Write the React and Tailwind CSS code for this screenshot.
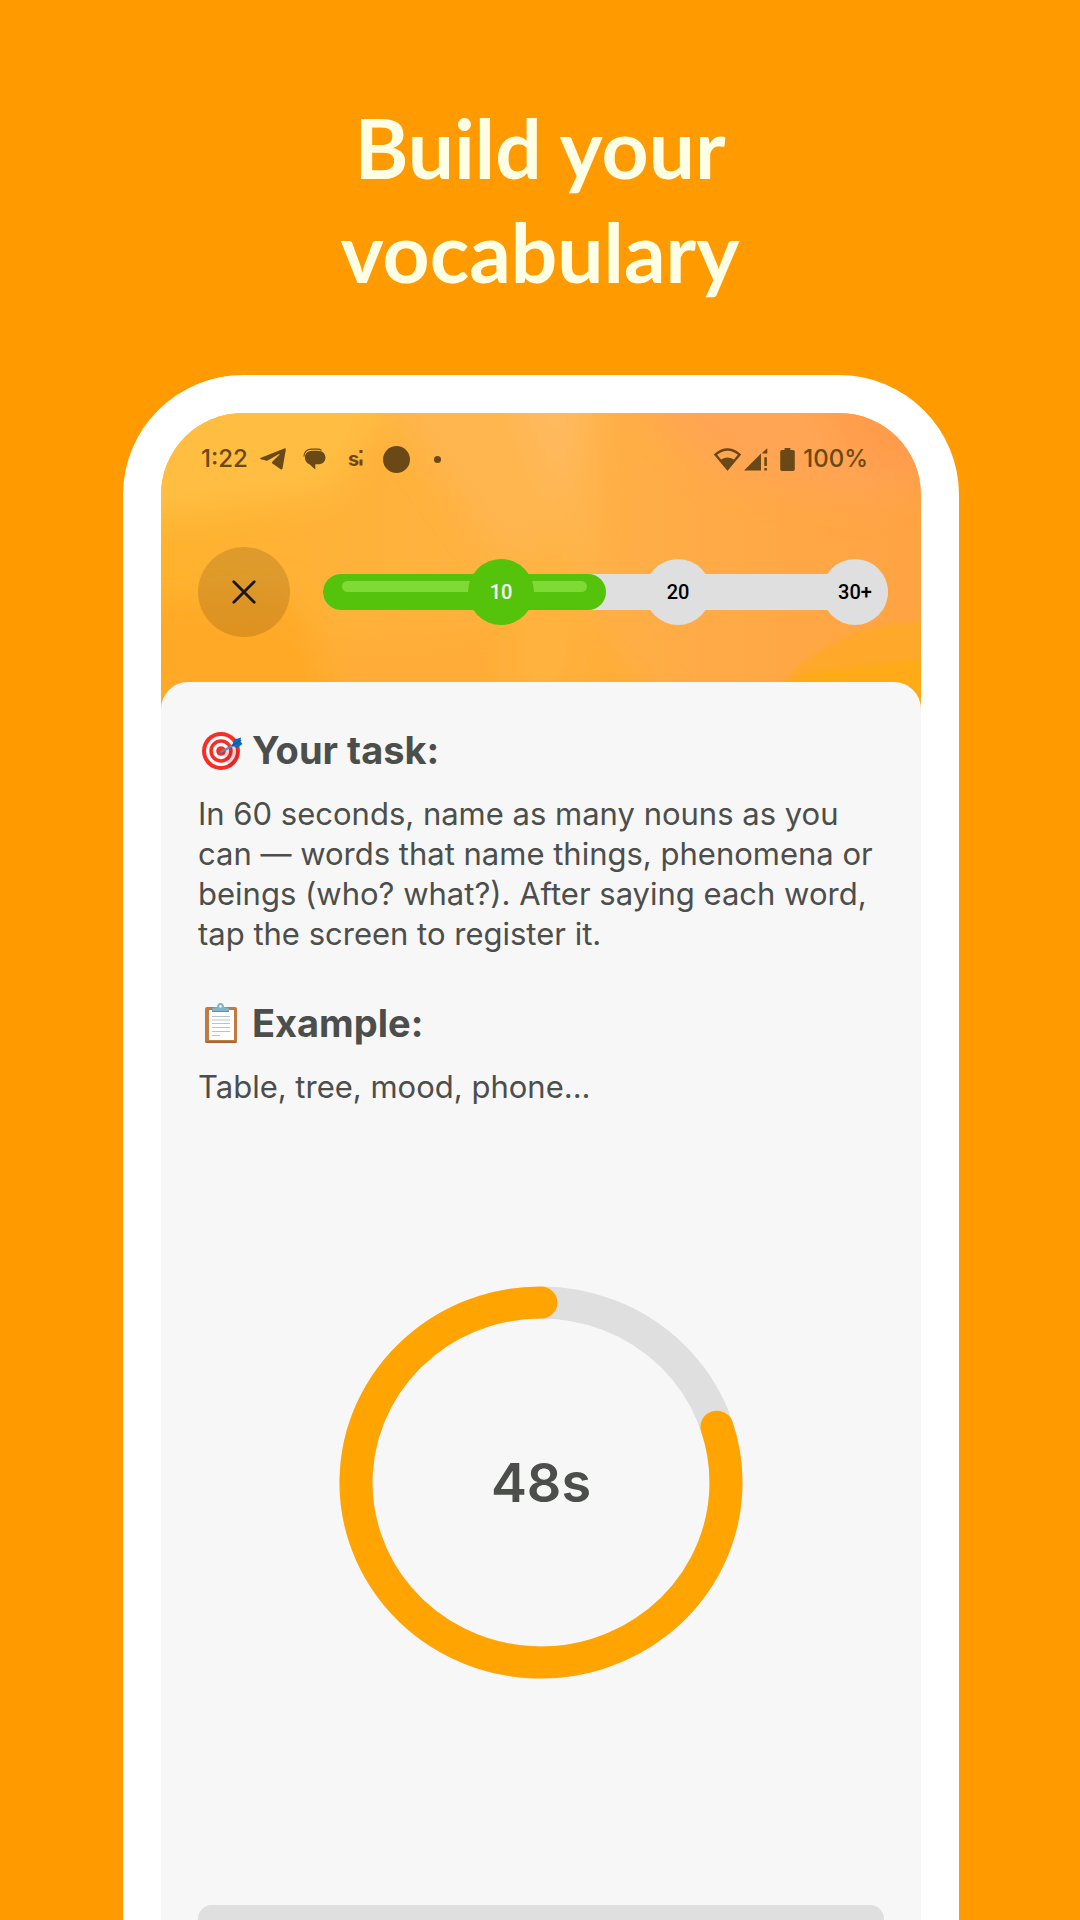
import React from "react";

const STEPS = [
  { label: "10", done: true },
  { label: "20", done: false },
  { label: "30+", done: false },
];

function HeaderArt() {
  return (
    <svg className="absolute inset-x-0 top-0 h-[300px] w-full" viewBox="0 0 760 300" preserveAspectRatio="none" aria-hidden="true">
      <defs>
        <linearGradient id="base" x1="0" y1="0" x2="1" y2="0">
          <stop offset="0" stopColor="#ffb22e" />
          <stop offset="0.5" stopColor="#ffb245" />
          <stop offset="0.72" stopColor="#ffaa47" />
          <stop offset="1" stopColor="#ffa343" />
        </linearGradient>
        <filter id="soft" x="-20%" y="-20%" width="140%" height="140%">
          <feGaussianBlur stdDeviation="16" />
        </filter>
        <filter id="edge" x="-20%" y="-20%" width="140%" height="140%">
          <feGaussianBlur stdDeviation="2" />
        </filter>
      </defs>
      <rect width="760" height="300" fill="url(#base)" />
      <g filter="url(#soft)">
        <path d="M-40 -40H250L170 80L0 105L-40 110Z" fill="#ffbe42" />
        <path d="M210 -40H440L430 180L330 130L250 20Z" fill="#ffb650" />
        <path d="M-40 190L120 180L260 340H-40Z" fill="#ffa927" />
        <path d="M150 230L420 190L540 340H200Z" fill="#ffad38" />
        <path d="M350 -40H430L400 90Z" fill="#ffba60" />
        <path d="M395 110L425 180L415 270L350 290L350 190Z" fill="#ffb23c" />
        <path d="M450 -40H800V50L700 90L560 60Z" fill="#ffa552" />
        <path d="M640 -40H800V80L700 50Z" fill="#ff9c4b" />
      </g>
      <path d="M586 310L632 258Q690 205 780 208V310Z" fill="#ffa82a" filter="url(#edge)" />
      <path d="M590 310L640 262Q690 255 780 245V310Z" fill="#ffaa18" filter="url(#edge)" />
    </svg>
  );
}

function StatusBar() {
  return (
    <div className="flex h-7 items-center justify-between pl-[40px] pr-[53px] font-['Inter',sans-serif] text-2xl font-medium text-[#6a4916]">
      <div className="flex items-center">
        <span className="w-[46px] whitespace-nowrap">1:22</span>
        <svg className="ml-[13px] h-[22px] w-[26px]" viewBox="0 0 26 22" fill="currentColor" aria-hidden="true">
          <path d="M1 9.8L24.2.4Q26-.2 25.8 1.7L22.6 20.3Q22.2 22 20.7 21.2L12.4 15.4Q11.4 14.6 12.3 13.7L19.5 6.4Q19.8 5.8 19 6.1L8.2 12.3Q7 12.9 5.8 12.6L.9 11.2Q-.7 10.5 1 9.8Z" />
        </svg>
        <svg className="ml-[17px] h-[22px] w-[23px]" viewBox="0 0 23 22" fill="currentColor" aria-hidden="true">
          <path d="M9 2.7H15C25 2.7 24.6 16.2 16 16.2H12.3V21.6L6.4 16.3C.2 14.2-.2 3 9 2.7Z" />
          <path d="M.9 8.5C1.2 3.6 4 1.3 8 1.1H15Q17 1.1 18.4 2.4" fill="none" stroke="currentColor" strokeWidth="1.1" />
        </svg>
        <span className="ml-[22px] flex items-end" aria-label="si">
          <span className="text-xl font-bold leading-5">s</span>
          <svg className="mb-[3px] h-4 w-[4px]" viewBox="0 0 4 16" fill="currentColor" aria-hidden="true">
            <path d="M.5 0h3v3h-3zM.5 9.5h3v6h-3z" />
          </svg>
        </span>
        <span className="ml-5 size-[27px] rounded-full bg-current" />
        <span className="ml-6 size-[7px] rounded-full bg-current" />
      </div>
      <div className="flex items-center">
        <svg className="h-[23px] w-[27px]" viewBox="0 0 27 23" fill="currentColor" aria-hidden="true">
          <path d="M1.4 6.6Q13.5-3.4 25.6 6.6L13.5 21Z" fill="none" stroke="currentColor" strokeWidth="2.4" />
          <path d="M5.5 12.5Q13.5 6.5 21.5 12.5L13.5 22.6Z" />
        </svg>
        <svg className="ml-[3px] h-[23px] w-6" viewBox="0 0 24 23" fill="currentColor" aria-hidden="true">
          <path d="M0 22.6L17 5.5V22.6ZM18 4.9L23.3.2V5.4H18.5ZM20.3 9.2h2.6v8.7h-2.6zM20.3 20h2.6v2.6h-2.6z" />
        </svg>
        <svg className="ml-3 h-[23px] w-[15px]" viewBox="0 0 15 23" fill="currentColor" aria-hidden="true">
          <path d="M4.6 0h5.8v2H13q1.8 0 1.8 1.8v17.4Q14.800 23 13 23H2Q.2 23 .2 21.200V3.800Q.2 2 2 2h2.600Z" />
        </svg>
        <span className="ml-2">100%</span>
      </div>
    </div>
  );
}

function Progress() {
  return (
    <div className="relative flex-1" role="progressbar" aria-label="Words named" aria-valuemin={0} aria-valuemax={100} aria-valuenow={50}>
      <div className="absolute inset-x-0 top-[15px] h-9 rounded-full bg-[#dfdfdf]">
        <div className="h-full w-1/2 rounded-full bg-[#55c20b] px-[19px] pt-[7px]">
          <div className="h-[11px] rounded-full bg-[#7fda35]" />
        </div>
      </div>
      <ol className="relative flex pl-[34px]">
        {STEPS.map((s) => (
          <li key={s.label} className="flex flex-1 justify-end">
            <span
              className={
                "flex size-[66px] items-center justify-center rounded-full font-['Roboto',sans-serif] text-xl font-medium " +
                (s.done ? "bg-[#55c20b] text-white" : "bg-[#dfdfdf] text-black")
              }
            >
              {s.label}
            </span>
          </li>
        ))}
      </ol>
    </div>
  );
}

function TargetIcon() {
  return (
    <svg className="h-10 w-[42px]" viewBox="0 0 42 40" aria-hidden="true">
      <circle cx="20" cy="21" r="19" fill="#fb2c23" />
      <circle cx="20" cy="21" r="15" fill="#fff" />
      <circle cx="20" cy="21" r="11.700" fill="#fb2c23" />
      <circle cx="20" cy="21" r="8.200" fill="#fff" />
      <circle cx="20" cy="21" r="4.800" fill="#fb2c23" />
      <path d="M21 22L35 15L38 24Q36 33 29 37.500Z" fill="#8a0a30" opacity=".18" />
      <path d="M20 22L32 15.500" stroke="#4d8fc4" strokeWidth="2" strokeLinecap="round" />
      <path d="M31 15.500L33.500 9.500L40 7.500L39.500 11.500L41.500 14L36 18Z" fill="#0d6bbd" />
      <path d="M31 15.500L40 10.500" stroke="#1c4f8f" strokeWidth="1.200" />
    </svg>
  );
}

function ClipboardIcon() {
  return (
    <svg className="h-10 w-[42px]" viewBox="0 0 42 40" aria-hidden="true">
      <rect x="4" y="4" width="32" height="36" rx="2" fill="#c17a42" />
      <path d="M4 38.500H36V38Q36 40 34 40H6Q4 40 4 38Z" fill="#a35f30" />
      <path d="M8 7H33V37H8Z" fill="#fff" />
      <path d="M11 13.500H29M11 17H29M11 20.500H29M11 24.500H29M11 28.500H29M11 32.500H19" stroke="#b4c4d3" strokeWidth="1.100" />
      <path d="M11 9V6.500Q11 4.500 13.500 4.500H16Q16 0 19.500 0T23 4.500H25.500Q28 4.500 28 6.500V9Z" fill="#80b4ca" />
      <path d="M11 8H28V9H11Z" fill="#5794b0" />
      <circle cx="19.500" cy="3.300" r="1.400" fill="#e8f1f5" />
    </svg>
  );
}

function Section({ icon, title, children }) {
  return (
    <section>
      <h2 className="flex h-12 items-center gap-[9px] pl-[3px] text-[38px] font-bold">
        {icon}
        {title}
      </h2>
      <p className="mt-5 text-[31px] leading-10">{children}</p>
    </section>
  );
}

function Timer() {
  return (
    <div className="relative mx-auto h-[393px] w-[404px]" role="timer">
      <svg className="size-full" viewBox="0 0 404 404" preserveAspectRatio="none" fill="none" strokeWidth="33" aria-hidden="true">
        <circle cx="202" cy="202" r="185" stroke="#dfdfdf" />
        <circle cx="202" cy="202" r="185" stroke="#ffa400" strokeLinecap="round" pathLength="100" strokeDasharray="80 100" transform="rotate(-18 202 202)" />
      </svg>
      <span className="absolute inset-0 flex items-center justify-center text-[54px] font-semibold">48s</span>
    </div>
  );
}

export default function App() {
  return (
    <main className="flex min-h-screen flex-col bg-[#ff9a00]">
      <h1 className="pt-[95px] text-center font-['Lato',sans-serif] text-[82px] font-bold leading-[104px] text-[#ffffe6]">
        Build your
        <br />
        vocabulary
      </h1>
      <div className="ml-[123px] mr-[121px] mt-[72px] flex flex-1 flex-col rounded-t-[120px] bg-white px-[38px] pt-[38px]">
        <div className="relative flex flex-1 flex-col overflow-hidden rounded-t-[82px]">
          <HeaderArt />
          <header className="relative pt-8">
            <StatusBar />
            <div className="flex items-center pb-[45px] pl-[37px] pr-[33px] pt-[74px]">
              <button type="button" aria-label="Close" className="mr-[33px] flex h-[90px] w-[92px] items-center justify-center rounded-[50%] bg-black/13">
                <svg className="size-6" viewBox="0 0 24 24" fill="none" stroke="#1a1610" strokeWidth="2.800" strokeLinecap="round" aria-hidden="true">
                  <path d="M1.800 1.800L22.200 22.200M22.200 1.800L1.800 22.200" />
                </svg>
              </button>
              <Progress />
            </div>
          </header>
          <div className="relative flex flex-1 flex-col rounded-t-[27px] bg-[#f7f7f7] px-[37px] pt-11 font-['Inter',sans-serif] text-[#4c4e4b]">
            <div className="flex flex-col gap-[45px]">
              <Section icon={<TargetIcon />} title="Your task:">
                In 60 seconds, name as many nouns as you can — words that name things, phenomena or beings (who? what?). After saying each word, tap the screen to register it.
              </Section>
              <Section icon={<ClipboardIcon />} title="Example:">
                Table, tree, mood, phone...
              </Section>
            </div>
            <div className="mt-[179px]">
              <Timer />
            </div>
            <button type="button" aria-label="Register word" className="mt-auto h-[15px] w-full rounded-t-[14px] bg-[#dfdfdf]" />
          </div>
        </div>
      </div>
    </main>
  );
}
